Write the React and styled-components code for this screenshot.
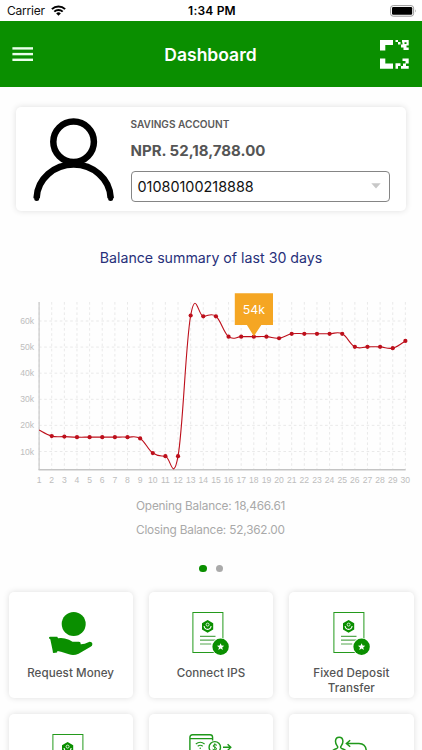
import React from 'react';
import styled, { createGlobalStyle } from 'styled-components';

const GREEN = '#0a8f00';
const RED = '#bd0f1b';

const GlobalStyle = createGlobalStyle`
  body {
    margin: 0;
    background: #fefefe;
    overflow: hidden;
    font-family: 'Inter', sans-serif;
  }
  svg {
    display: block;
  }
`;

const Screen = styled.div`
  width: 422px;
  height: 750px;
  overflow: hidden;
  display: flex;
  flex-direction: column;
`;

const StatusBar = styled.div`
  display: grid;
  grid-template-columns: 1fr auto 1fr;
  align-items: center;
  flex: none;
  height: 21px;
  padding: 0 5px 0 7px;
  background: #fff;
  font-size: 12px;
  line-height: 21px;
  color: #111;
`;

const Carrier = styled.div`
  display: flex;
  align-items: center;
  gap: 6px;
  letter-spacing: -0.2px;
`;

const Clock = styled.div`
  font-weight: 600;
  letter-spacing: 0.2px;
  color: #000;
`;

const Battery = styled.div`
  justify-self: end;
`;

const Header = styled.header`
  display: grid;
  grid-template-columns: 1fr auto 1fr;
  align-items: center;
  flex: none;
  height: 66px;
  padding: 0 13px 0 12px;
  background: ${GREEN};
`;

const HeaderTitle = styled.h1`
  margin: 0;
  font-size: 17.5px;
  font-weight: 600;
  color: #fff;
`;

const ScanButton = styled.div`
  justify-self: end;
`;

const AccountCard = styled.section`
  display: flex;
  flex: none;
  height: 104px;
  margin: 20px 16px 0;
  padding-left: 17px;
  box-sizing: border-box;
  border-radius: 5px;
  background: #fff;
  box-shadow: 0 0 6px rgba(0, 0, 0, 0.13);
`;

const AccountInfo = styled.div`
  width: 259px;
  margin-left: 15.5px;
  padding-top: 10.5px;
`;

const AccountType = styled.div`
  font-size: 10.1px;
  line-height: 12px;
  font-weight: 600;
  color: #5a5a5a;
`;

const Amount = styled.div`
  margin-top: 12.5px;
  font-size: 15px;
  line-height: 18px;
  font-weight: 700;
  color: #555;
`;

const AccountSelect = styled.div`
  display: flex;
  align-items: center;
  justify-content: space-between;
  height: 31px;
  margin-top: 11px;
  padding: 0 8px 1px 6px;
  box-sizing: border-box;
  border: 1px solid #858585;
  border-radius: 4px;
  font-size: 14.4px;
  color: #111;
`;

const SummaryTitle = styled.h2`
  flex: none;
  margin: 37px 0 22px;
  text-align: center;
  font-size: 14.2px;
  line-height: 20px;
  font-weight: 400;
  color: #27307a;
`;

const BalanceLine = styled.div`
  flex: none;
  height: 23.5px;
  padding-left: 136px;
  font-size: 11.8px;
  line-height: 24px;
  letter-spacing: -0.18px;
  color: #a9a9a9;
`;

const Dots = styled.div`
  display: flex;
  justify-content: center;
  flex: none;
  gap: 9px;
  margin: 23.5px 0 20px;
`;

const Dot = styled.span`
  width: 7.5px;
  height: 7.5px;
  border-radius: 50%;
  background: ${({ $active }) => ($active ? GREEN : '#aaa')};
`;

const Tiles = styled.div`
  display: grid;
  grid-template-columns: repeat(3, 1fr);
  grid-auto-rows: 106px;
  gap: 16px;
  padding: 0 8.5px;
`;

const Tile = styled.div`
  display: flex;
  flex-direction: column;
  align-items: center;
  padding-top: 20px;
  box-sizing: border-box;
  border-radius: 5px;
  background: #fff;
  box-shadow: 0 0 6px rgba(0, 0, 0, 0.13);
`;

const TileLabel = styled.div`
  width: 100px;
  margin-top: 10.5px;
  text-align: center;
  font-size: 11.6px;
  line-height: 15.3px;
  font-weight: 500;
  letter-spacing: ${({ $spacing }) => $spacing || 0}px;
  color: #555;
`;

const WifiIcon = () => (
  <svg width="15" height="11" viewBox="0 0 15 11" fill="none" stroke="#000" strokeWidth="2">
    <path d="M0.9 4.1A9.4 9.4 0 0 1 14.1 4.1" />
    <path d="M3.3 6.6A6 6 0 0 1 11.7 6.6" />
    <path d="M7.5 10.8L5.2 8.4A3.3 3.3 0 0 1 9.8 8.4Z" fill="#000" stroke="none" />
  </svg>
);

const BatteryIcon = () => (
  <svg width="27" height="12" viewBox="0 0 27 12">
    <rect x="0.6" y="0.6" width="23" height="10.6" rx="2.6" fill="none" stroke="#999" />
    <rect x="2" y="2" width="20.2" height="7.8" rx="1.2" fill="#000" />
    <path d="M25 4.2Q26.5 5.9 25 7.6Z" fill="#999" />
  </svg>
);

const MenuIcon = () => (
  <svg width="21" height="15" viewBox="0 0 21 15" fill="#eaffea">
    <rect x="0.4" y="0.2" width="20.6" height="2.4" />
    <rect x="0.4" y="5.9" width="20.6" height="2.4" />
    <rect x="0.4" y="11.6" width="20.6" height="2.4" />
  </svg>
);

const ScanIcon = () => (
  <svg width="29" height="29" viewBox="0 0 29 29" fill="#fff">
    <path d="M0 0H13V5H5.3V10.5H0Z" />
    <path d="M0 18.5H5.3V23.5H13V28.7H0Z" />
    <path d="M15.5 0H18V2H15.5ZM18 2H20.5V4.5H18ZM22 0H28.7V5.5H26.5V7.5H28.7V10H23.5V7.5H21V4.5H22.5V2.5H22ZM24.5 2.3V4H26.5V2.3Z" fillRule="evenodd" />
    <path d="M22.5 18.5H28.7V23.5H26V26H28.7V28.7H21V26H23V23.5H25.5V21H22.5ZM15.5 23.3H20.5V26H18V28.7H15.5Z" />
  </svg>
);

const PersonIcon = () => (
  <svg width="82" height="104" viewBox="0 0 82 104" fill="none" stroke="#000" strokeWidth="6.5">
    <circle cx="40.6" cy="34.8" r="20.3" />
    <path d="M3.7 91.2V90.3A37 34.6 0 0 1 77.6 90.3V91.2" />
    <path d="M3.7 90V91.4M77.6 90V91.4" strokeWidth="5" strokeLinecap="round" />
  </svg>
);

const CaretIcon = () => (
  <svg width="10" height="6" viewBox="0 0 10 6">
    <path d="M0.3 0.3H9.7L5 5.4Z" fill="#c8c8c8" />
  </svg>
);

const HandIcon = () => (
  <svg width="44" height="43" viewBox="0 0 44 43" fill={GREEN}>
    <circle cx="24.7" cy="12" r="12" />
    <path d="M0 25.2Q0.5 24.4 2 24.8L8.3 24.7L9 26.3Q14 25.3 20 27.8L23.5 29.8H30Q32 30.2 31.6 32.2Q35 32.4 40 29.9Q43 29.6 43.4 31.8Q43.5 34 41.6 34.8L29.6 41.7Q24.5 43.8 20 42.2L12 39.8L8.5 39L8 40.5L4.7 41Q3.6 40.8 3.8 39.2L1.3 27.3Q0 27 0 25.2Z" />
  </svg>
);

const DocumentIcon = () => (
  <svg width="37" height="43" viewBox="0 0 37 43">
    <rect x="0.9" y="0.5" width="30" height="40" fill="#fff" stroke="#249a1c" />
    <path d="M15.6 8L21.2 11.2V17.6L15.6 20.8L10 17.6V11.2Z" fill={GREEN} />
    <circle cx="15.6" cy="12.6" r="1.5" fill="none" stroke="#fff" strokeWidth="0.8" />
    <path d="M12.1 14Q12.4 17.2 15.6 17.4Q18.8 17.2 19.1 14" fill="none" stroke="#fff" strokeWidth="1.1" />
    <path d="M8 24.4H23.5M8 28.2H23.5M8 32H19.2" stroke="#55a850" strokeWidth="1.2" />
    <circle cx="28.6" cy="34.8" r="9" fill="#fff" />
    <circle cx="28.6" cy="34.8" r="8.2" fill={GREEN} />
    <path d="M28.6 31.2L29.6 33.6L32.2 33.8L30.2 35.5L30.9 38L28.6 36.6L26.3 38L27 35.5L25 33.8L27.6 33.6Z" fill="#fff" />
  </svg>
);

const CardTransferIcon = () => (
  <svg width="43" height="43" viewBox="0 0 43 43" fill="none" stroke="#1f981a" strokeWidth="1.4">
    <path d="M0.9 30V3.5Q0.9 0.8 3.5 0.8H21Q23.6 0.8 23.6 3.5V6.5M0.9 4.6H23.6" />
    <path d="M6.8 10Q11.2 6.6 15.6 10M8.7 12.2Q11.2 10.3 13.7 12.2" strokeWidth="1.1" />
    <circle cx="11.2" cy="14.2" r="0.7" fill={GREEN} stroke="none" />
    <circle cx="25.8" cy="13.3" r="5.7" />
    <path d="M28 11.3Q26 9.9 24.5 11Q23.3 12.6 25.8 13.3Q28.5 14 27.2 15.6Q25.6 16.8 23.6 15.2M25.8 9.3V17.4" strokeWidth="1" />
    <path d="M34 13.3H41.5M38.6 10.2L41.8 13.3L38.6 16.4" />
  </svg>
);

const ReturnIcon = () => (
  <svg width="43" height="43" viewBox="0 0 43 43" fill="none" stroke="#1f981a" strokeWidth="1.5">
    <path d="M1.5 20Q1.5 15.8 6.8 14.4Q8.6 13.6 7 11.6Q5.4 9.6 5.5 7Q5.8 3.2 9.2 3.2Q12.6 3.2 12.9 7Q13 9.6 11.4 11.6Q9.8 13.6 11.6 14.4Q17 15.8 17 20" />
    <path d="M16.2 9.5H29Q36 9.9 36.3 17M20.2 6.2L16.4 9.5L20.2 12.8" />
  </svg>
);

// balance of each day, in thousands
const balances = [
  18.2, 15.9, 15.7, 15.5, 15.5, 15.5, 15.5, 15.5, 15, 9.4,
  8.2, 8.2, 62.1, 61.8, 61.8, 54, 54, 54, 54, 53.4,
  55.1, 55.1, 55.1, 55.1, 55.1, 50.1, 50.1, 50.1, 49.6, 52.36,
];

const px = (i) => 39.1 + i * 12.63;
const py = (value) => 187.6 - value * 2.61;
const points = balances.map((value, i) => [px(i), py(value)]);

// each handle is a fifth of the distance between the neighbouring points
const curve = points.slice(1).reduce((d, cur, index) => {
  const i = index + 1;
  const prev = points[i - 1];
  const before = points[i - 2] || prev;
  const next = points[i + 1] || cur;
  const c1 = [prev[0] + (cur[0] - before[0]) * 0.2, prev[1] + (cur[1] - before[1]) * 0.2];
  const c2 = [cur[0] - (next[0] - prev[0]) * 0.2, cur[1] - (next[1] - prev[1]) * 0.2];
  return `${d} C${c1} ${c2} ${cur}`;
}, `M${points[0]}`);

const ChartSvg = styled.svg`
  flex: none;
  font-family: 'Liberation Sans', sans-serif;
`;

const AxisLabel = styled.text`
  font-size: 8.6px;
  fill: #bdbdbd;
`;

const MarkerLabel = styled.text`
  font-family: 'Inter', sans-serif;
  font-size: 12.3px;
  fill: #fff;
`;

const BalanceChart = () => (
  <ChartSvg width="422" height="204" viewBox="0 0 422 204">
    <g stroke="#e6e6e6" strokeWidth="0.9" strokeDasharray="2.6 2.6">
      {balances.map((_, i) => (
        <line key={i} x1={px(i)} x2={px(i)} y1="12" y2="180" />
      ))}
      {[10, 20, 30, 40, 50, 60].map((v) => (
        <line key={v} x1="39" x2="405.5" y1={py(v)} y2={py(v)} />
      ))}
    </g>
    <path d="M39.1 12V180" stroke="#c9c9c9" strokeWidth="1.2" />
    <path d="M38.6 179.8H405.6" stroke="#c4c4c4" strokeWidth="1.4" />
    {[10, 20, 30, 40, 50, 60].map((v) => (
      <AxisLabel key={v} x="34" y={py(v) + 3} textAnchor="end">{v}k</AxisLabel>
    ))}
    {balances.map((_, i) => (
      <AxisLabel key={i} x={px(i)} y="192.5" textAnchor="middle">{i + 1}</AxisLabel>
    ))}
    <path d={curve} fill="none" stroke={RED} strokeWidth="1.1" />
    {points.slice(1).map(([x, y]) => (
      <circle key={x} cx={x} cy={y} r="2.1" fill={RED} />
    ))}
    <path d="M234.8 3.3H273V35H261.3L253.9 46.2L246.9 35H234.8Z" fill="#f5a623" />
    <MarkerLabel x="253.9" y="23.5" textAnchor="middle">54k</MarkerLabel>
  </ChartSvg>
);

const services = [
  { label: 'Request Money', icon: HandIcon, spacing: 0.05 },
  { label: 'Connect IPS', icon: DocumentIcon, spacing: 0.05 },
  { label: 'Fixed Deposit Transfer', icon: DocumentIcon, spacing: 0.05 },
  { icon: DocumentIcon },
  { icon: CardTransferIcon },
  { icon: ReturnIcon },
];

const App = () => (
  <>
    <GlobalStyle />
    <Screen>
      <StatusBar>
        <Carrier>Carrier <WifiIcon /></Carrier>
        <Clock>1:34 PM</Clock>
        <Battery><BatteryIcon /></Battery>
      </StatusBar>
      <Header>
        <MenuIcon />
        <HeaderTitle>Dashboard</HeaderTitle>
        <ScanButton><ScanIcon /></ScanButton>
      </Header>
      <AccountCard>
        <PersonIcon />
        <AccountInfo>
          <AccountType>SAVINGS ACCOUNT</AccountType>
          <Amount>NPR. 52,18,788.00</Amount>
          <AccountSelect>01080100218888 <CaretIcon /></AccountSelect>
        </AccountInfo>
      </AccountCard>
      <SummaryTitle>Balance summary of last 30 days</SummaryTitle>
      <BalanceChart />
      <BalanceLine>Opening Balance: 18,466.61</BalanceLine>
      <BalanceLine>Closing Balance: 52,362.00</BalanceLine>
      <Dots>
        <Dot $active />
        <Dot />
      </Dots>
      <Tiles>
        {services.map(({ label, icon: Icon, spacing }, i) => (
          <Tile key={i}>
            <Icon />
            {label && <TileLabel $spacing={spacing}>{label}</TileLabel>}
          </Tile>
        ))}
      </Tiles>
    </Screen>
  </>
);

export default App;
